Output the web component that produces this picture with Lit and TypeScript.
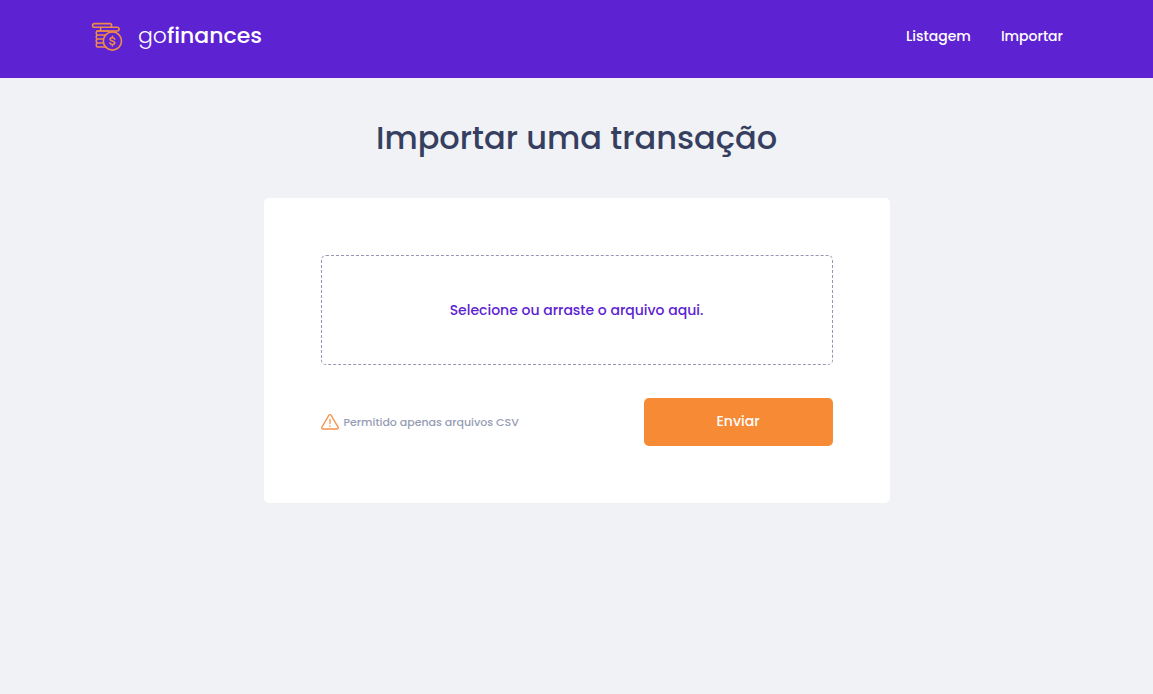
import { LitElement, html, css } from "lit";
import { customElement, state } from "lit/decorators.js";

@customElement("app-header")
class AppHeader extends LitElement {
  static styles = css`
    :host {
      display: block;
      background: #5d22d2;
      color: #fff;
    }
    .bar {
      box-sizing: border-box;
      max-width: 973px;
      height: 78px;
      margin: 0 auto;
      padding-bottom: 6px;
      display: flex;
      align-items: center;
      justify-content: space-between;
    }
    .brand {
      display: flex;
      align-items: center;
      gap: 14px;
      color: inherit;
      text-decoration: none;
      font-size: 22px;
      line-height: 34px;
      font-weight: 500;
    }
    .mark {
      display: block;
      width: 34px;
      height: 32px;
    }
    .thin {
      font-weight: 300;
    }
    nav {
      display: flex;
      gap: 30px;
    }
    .link {
      color: inherit;
      text-decoration: none;
      font-size: 14px;
      line-height: 24px;
      font-weight: 500;
    }
  `;

  render() {
    return html`
      <header class="bar">
        <a class="brand" href="#">
          <svg class="mark" viewBox="0 0 34 32" fill="none" stroke="#f08a48" stroke-width="1.6" stroke-linecap="round" stroke-linejoin="round" aria-hidden="true">
            <rect x="2.6" y="3.6" width="19" height="3.6" rx="1.8" />
            <path d="M10.6 7.2v3.7M21.2 7.2h6a1.9 1.9 0 0 1 0 3.8H6.8" />
            <path d="M18.5 11H7.8a1.5 1.5 0 0 0-1.5 1.5v1.1a1.4 1.4 0 0 0 1.4 1.4h7.6M7.7 15a1.4 1.4 0 0 0-1.4 1.4v1.2A1.4 1.4 0 0 0 7.7 19h5.3M7.7 19a1.4 1.4 0 0 0-1.4 1.4v1.2A1.4 1.4 0 0 0 7.7 23h5.6M7.7 23a1.4 1.4 0 0 0-1.4 1.4v1.2A1.4 1.4 0 0 0 7.7 27h8.5" />
            <circle cx="22.4" cy="21" r="9.1" />
            <path d="M24.7 19.2c-.2-1-1.1-1.5-2.3-1.5-1.3 0-2.3.6-2.3 1.6 0 2.3 4.7 1.1 4.7 3.5 0 1-1.1 1.7-2.4 1.7s-2.3-.6-2.5-1.7M22.4 16.3v1.4M22.4 24.5v1.4" />
          </svg>
          <span><span class="thin">go</span>finances</span>
        </a>
        <nav>
          <a class="link" href="#listagem">Listagem</a>
          <a class="link" href="#importar">Importar</a>
        </nav>
      </header>
    `;
  }
}

@customElement("import-form")
class ImportForm extends LitElement {
  @state() private fileName = "";

  static styles = css`
    :host {
      display: block;
    }
    .card {
      box-sizing: border-box;
      background: #fff;
      border-radius: 5px;
      padding: 57px;
    }
    .drop {
      position: relative;
      display: flex;
      align-items: center;
      justify-content: center;
      box-sizing: border-box;
      min-height: 110px;
      border: 1px dashed #9a93b3;
      border-radius: 5px;
      color: #5d22d2;
      font-size: 14px;
      line-height: 24px;
      font-weight: 500;
      cursor: pointer;
    }
    .file {
      position: absolute;
      inset: 0;
      width: 100%;
      height: 100%;
      opacity: 0;
      cursor: pointer;
    }
    .foot {
      display: flex;
      align-items: center;
      justify-content: space-between;
      margin-top: 33px;
    }
    .hint {
      display: flex;
      align-items: center;
      gap: 5px;
      margin: 0;
      color: #969cb3;
      font-size: 11px;
      line-height: 16px;
      font-weight: 500;
    }
    .warn {
      display: block;
      width: 18px;
      height: 18px;
    }
    .send {
      width: 189px;
      height: 48px;
      padding: 0 0 2px;
      border: 0;
      border-radius: 5px;
      background: #f68a35;
      color: #fff;
      font: inherit;
      font-size: 14px;
      line-height: 24px;
      font-weight: 500;
      cursor: pointer;
    }
  `;

  private onFile(e: Event) {
    const file = (e.target as HTMLInputElement).files?.[0];
    this.fileName = file ? file.name : "";
  }

  render() {
    return html`
      <form class="card" @submit=${(e: Event) => e.preventDefault()}>
        <label class="drop" for="file">
          <span>${this.fileName || "Selecione ou arraste o arquivo aqui."}</span>
          <input class="file" id="file" type="file" accept=".csv" @change=${this.onFile} />
        </label>
        <div class="foot">
          <p class="hint">
            <svg class="warn" viewBox="0 0 18 18" fill="none" stroke="#f6914a" stroke-width="1.3" stroke-linecap="round" stroke-linejoin="round" aria-hidden="true">
              <path d="M7.8 2.3.9 14.1c-.5.9.1 1.9 1.1 1.9h14c1 0 1.6-1 1.1-1.9L10.200 2.300c-.5-.9-1.900-.9-2.400 0z" />
              <path d="M9 6.500v4M9 13v.3" />
            </svg>
            Permitido apenas arquivos CSV
          </p>
          <button class="send" type="submit">Enviar</button>
        </div>
      </form>
    `;
  }
}

@customElement("app-root")
class AppRoot extends LitElement {
  static styles = css`
    :host {
      display: block;
      min-height: 100vh;
      background: #f0f2f5;
      font-family: Poppins, Inter, sans-serif;
    }
    .page {
      max-width: 626px;
      margin: 0 auto;
      padding: 34px 0;
    }
    .title {
      margin: 0 0 34px;
      color: #363f5f;
      font-size: 32px;
      line-height: 52px;
      font-weight: 500;
      text-align: center;
    }
  `;

  render() {
    return html`
      <app-header></app-header>
      <main class="page">
        <h1 class="title">Importar uma transação</h1>
        <import-form></import-form>
      </main>
    `;
  }
}
